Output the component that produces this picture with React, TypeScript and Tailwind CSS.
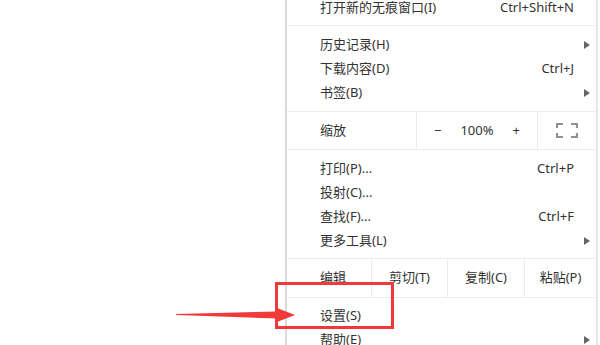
import { ReactNode } from "react";

function Arrow() {
  return <span className="ml-auto mr-[6px] h-0 w-0 border-y-[4px] border-l-[6px] border-y-transparent border-l-[#666]" />;
}

function Item({ label, shortcut, sub }: { label: string; shortcut?: string; sub?: boolean }) {
  return (
    <div className="flex h-[24px] items-center pl-[33px]">
      <span>{label}</span>
      {shortcut && <span className="ml-auto mr-[22px]">{shortcut}</span>}
      {sub && <Arrow />}
    </div>
  );
}

function Group({ children, className = "" }: { children: ReactNode; className?: string }) {
  return <div className={`border-b border-[#ebebeb] ${className}`}>{children}</div>;
}

function FullscreenIcon() {
  return (
    <svg width="22" height="15" viewBox="0 0 22 15" fill="none" stroke="#8f8f8f" strokeWidth="2.2">
      <path d="M1 5V1h6M15 1h6v4M21 10v4h-6M7 14H1v-4" />
    </svg>
  );
}

export default function App() {
  return (
    <div className="relative h-[345px] w-[600px] overflow-hidden bg-white text-[13px] text-[#333]" style={{ fontFamily: '"Noto Sans", "Noto Sans CJK SC", sans-serif' }}>
      <div className="-mt-[4px] ml-[285px] w-[313px] border-x-2 border-l-[#dadada] border-r-[#e6e6e6] border-x-[#e2e2e2] bg-white">
        <Group className="pb-[5px]">
          <Item label="打开新的无痕窗口(I)" shortcut="Ctrl+Shift+N" />
        </Group>
        <Group className="pb-[6px] pt-[7px]">
          <Item label="历史记录(H)" sub />
          <Item label="下载内容(D)" shortcut="Ctrl+J" />
          <Item label="书签(B)" sub />
        </Group>
        <Group className="flex h-[38px]">
          <div className="flex w-[129px] items-center pl-[33px]">缩放</div>
          <div className="relative flex w-[122px] items-center justify-center border-x border-[#ebebeb]">
            <span className="absolute left-[17px]">−</span>
            <span>100%</span>
            <span className="absolute right-[17px]">+</span>
          </div>
          <div className="flex flex-1 items-center justify-center">
            <FullscreenIcon />
          </div>
        </Group>
        <Group className="pb-[5px] pt-[7px]">
          <Item label="打印(P)..." shortcut="Ctrl+P" />
          <Item label="投射(C)..." />
          <Item label="查找(F)..." shortcut="Ctrl+F" />
          <Item label="更多工具(L)" sub />
        </Group>
        <Group className="flex h-[39px]">
          <div className="flex w-[84px] items-center pl-[33px]">编辑</div>
          <div className="flex w-[76px] items-center justify-center border-l border-[#ebebeb]">剪切(T)</div>
          <div className="flex w-[77px] items-center justify-center border-l border-[#ebebeb]">复制(C)</div>
          <div className="flex flex-1 items-center justify-center border-l border-[#ebebeb]">粘贴(P)</div>
        </Group>
        <div className="pt-[6px]">
          <Item label="设置(S)" />
          <Item label="帮助(E)" sub />
        </div>
      </div>

      <div className="absolute left-[275px] top-[282px] h-[47px] w-[119px] border-[3px] border-[#f03a3a]" />
      <svg className="absolute left-0 top-0" width="600" height="345">
        <polygon points="176,314 277,311.5 277,308 295,315 277,322 277,318.5 176,315" fill="#f03a3a" />
      </svg>
    </div>
  );
}
